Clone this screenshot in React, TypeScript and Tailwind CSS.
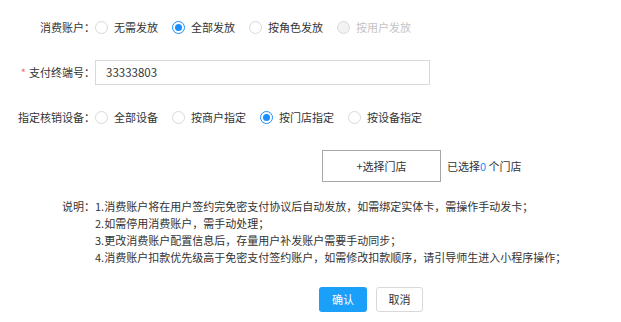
import React from 'react';

const font = { fontFamily: '"Noto Sans CJK SC", "Noto Sans", sans-serif' };

const Radio: React.FC<{ label: string; checked?: boolean; disabled?: boolean }> = ({ label, checked, disabled }) => (
  <label className="flex items-center mr-[14px]">
    <span
      className={
        'w-[13px] h-[13px] rounded-full border flex items-center justify-center mr-[6px] ' +
        (checked
          ? 'border-[#1890ff] bg-white'
          : disabled
          ? 'border-[#d9d9d9] bg-[#f2f2f2]'
          : 'border-[#d9d9d9] bg-white')
      }
    >
      {checked && <span className="w-[7px] h-[7px] rounded-full bg-[#1890ff]" />}
    </span>
    <span className={disabled ? 'text-[#c4c4c4]' : 'text-[#333]'}>{label}</span>
  </label>
);

const Label: React.FC<{ children: React.ReactNode }> = ({ children }) => (
  <div className="w-[95px] shrink-0 text-right text-[#333] whitespace-nowrap">{children}</div>
);

export default function App() {
  const notes = [
    '1.消费账户将在用户签约完免密支付协议后自动发放，如需绑定实体卡，需操作手动发卡；',
    '2.如需停用消费账户，需手动处理；',
    '3.更改消费账户配置信息后，存量用户补发账户需要手动同步；',
    '4.消费账户扣款优先级高于免密支付签约账户，如需修改扣款顺序，请引导师生进入小程序操作；',
  ];

  return (
    <div className="w-[621px] h-[322px] bg-white text-[11px] leading-none pt-[15px]" style={font}>
      <div className="flex items-center h-[25px]">
        <Label>消费账户：</Label>
        <Radio label="无需发放" />
        <Radio label="全部发放" checked />
        <Radio label="按角色发放" />
        <Radio label="按用户发放" disabled />
      </div>

      <div className="flex items-center h-[25px] mt-[20px]">
        <Label>
          <span className="text-[#f56c6c] mr-[3px]">*</span>支付终端号：
        </Label>
        <div className="w-[335px] h-[25px] border border-[#d9d9d9] flex items-center pl-[10px] text-[#333] text-[11.5px]">
          33333803
        </div>
      </div>

      <div className="flex items-center h-[25px] mt-[20px]">
        <Label>指定核销设备：</Label>
        <Radio label="全部设备" />
        <Radio label="按商户指定" />
        <Radio label="按门店指定" checked />
        <Radio label="按设备指定" />
      </div>

      <div className="flex items-center mt-[20px] pl-[322px]">
        <button className="w-[119px] h-[32px] border border-[#a6a6a6] bg-white text-[#333] flex items-center justify-center">
          +选择门店
        </button>
        <span className="ml-[6px] text-[#333]">
          已选择<span className="text-[#1890ff]">0</span> 个门店
        </span>
      </div>

      <div className="flex mt-[16px] leading-[17px]">
        <Label>说明：</Label>
        <div className="flex flex-col text-[#333]">
          {notes.map((n) => (
            <div key={n} className="whitespace-nowrap">{n}</div>
          ))}
        </div>
      </div>

      <div className="flex mt-[21px] pl-[319px] gap-[9px]">
        <button className="w-[48px] h-[25px] rounded-[3px] bg-[#1aa0f9] text-white flex items-center justify-center">
          确认
        </button>
        <button className="w-[47px] h-[25px] rounded-[3px] border border-[#d9d9d9] bg-white text-[#333] flex items-center justify-center">
          取消
        </button>
      </div>
    </div>
  );
}
